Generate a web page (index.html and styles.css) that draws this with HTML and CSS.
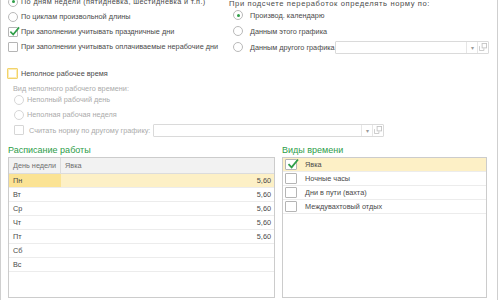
FILE: index.html
```html
<!DOCTYPE html>
<html lang="ru">
<head>
<meta charset="utf-8">
<link rel="stylesheet" href="styles.css">
</head>
<body>
<div class="page">
  <div class="top">
    <div class="col-left">
      <div class="row"><span class="radio on"></span><span class="wide-text">По дням недели (пятидневка, шестидневка и т.п.)</span></div>
      <div class="row"><span class="radio"></span><span>По циклам произвольной длины</span></div>
      <div class="row"><span class="check"><svg class="tick" viewBox="0 0 12 12"><path d="M1.5 6.2 L4.6 9.3 L11 1.5"/></svg></span><span>При заполнении учитывать праздничные дни</span></div>
      <div class="row"><span class="check"></span><span>При заполнении учитывать оплачиваемые нерабочие дни</span></div>
    </div>
    <div class="col-right">
      <div class="label">При подсчете переработок определять норму по:</div>
      <div class="rrow"><span class="radio on"></span><span>Производ. календарю</span></div>
      <div class="rrow"><span class="radio"></span><span>Данным этого графика</span></div>
      <div class="rrow"><span class="radio"></span><span class="rtext">Данным другого графика</span>
        <div class="field wide"><span class="fill"></span><span class="btn drop">▾</span><span class="btn open"><svg viewBox="0 0 9 9"><rect x="3.5" y="0.5" width="5" height="5"/><path d="M0.5 3.5 V8.5 H5.5 V6"/></svg></span></div>
      </div>
    </div>
  </div>

  <div class="part">
    <div class="row main"><span class="check focus"></span><span>Неполное рабочее время</span></div>
    <div class="sub">
      <div class="sublabel">Вид неполного рабочего времени:</div>
      <div class="row dis"><span class="radio"></span><span>Неполный рабочий день</span></div>
      <div class="row dis"><span class="radio"></span><span>Неполная рабочая неделя</span></div>
      <div class="row dis tall"><span class="check"></span><span class="ctext">Считать норму по другому графику:</span>
        <div class="field narrow"><span class="fill"></span><span class="btn drop">▾</span><span class="btn open"><svg viewBox="0 0 9 9"><rect x="3.5" y="0.5" width="5" height="5"/><path d="M0.5 3.5 V8.5 H5.5 V6"/></svg></span></div>
      </div>
    </div>
  </div>

  <div class="bottom">
    <div class="panel schedule">
      <div class="heading">Расписание работы</div>
      <div class="table">
        <div class="thead"><span class="c1">День недели</span><span class="c2">Явка</span></div>
        <div class="tr sel"><span class="c1">Пн</span><span class="c2 num">5,60</span></div>
        <div class="tr"><span class="c1">Вт</span><span class="c2 num">5,60</span></div>
        <div class="tr"><span class="c1">Ср</span><span class="c2 num">5,60</span></div>
        <div class="tr"><span class="c1">Чт</span><span class="c2 num">5,60</span></div>
        <div class="tr"><span class="c1">Пт</span><span class="c2 num">5,60</span></div>
        <div class="tr"><span class="c1">Сб</span><span class="c2 num"></span></div>
        <div class="tr"><span class="c1">Вс</span><span class="c2 num"></span></div>
      </div>
    </div>
    <div class="panel kinds">
      <div class="heading">Виды времени</div>
      <div class="table">
        <div class="kr sel"><span class="kc"><span class="check"><svg class="tick" viewBox="0 0 12 12"><path d="M1.5 6.2 L4.6 9.3 L11 1.5"/></svg></span></span><span class="kt">Явка</span></div>
        <div class="kr"><span class="kc"><span class="check"></span></span><span class="kt">Ночные часы</span></div>
        <div class="kr"><span class="kc"><span class="check"></span></span><span class="kt">Дни в пути (вахта)</span></div>
        <div class="kr"><span class="kc"><span class="check"></span></span><span class="kt">Междувахтовый отдых</span></div>
      </div>
    </div>
  </div>
</div>
</body>
</html>
```
FILE: styles.css
```css
html, body {
  margin: 0;
  padding: 0;
  background: #ffffff;
  overflow: hidden;
}
body {
  font-family: "Liberation Sans", Arial, sans-serif;
  font-size: 7.3px;
  color: #4a4a4a;
}
.page {
  width: 496px;
  height: 300px;
  border-left: 1px solid #cfcfcf;
  border-right: 1px solid #cfcfcf;
  overflow: hidden;
}
.top {
  display: flex;
  margin-top: -6px;
}
.col-left {
  width: 221px;
  padding-left: 7px;
}
.row {
  display: flex;
  align-items: center;
  gap: 3px;
  height: 15px;
  white-space: nowrap;
}
.wide-text {
  letter-spacing: 0.35px;
}
.radio {
  box-sizing: border-box;
  width: 10px;
  height: 10px;
  border: 1px solid #b9b9b9;
  border-radius: 50%;
  background: #fff;
  position: relative;
  flex: none;
}
.radio.on::after {
  content: "";
  position: absolute;
  left: 2.5px;
  top: 2.5px;
  width: 3px;
  height: 3px;
  border-radius: 50%;
  background: #2f9e48;
}
.check {
  box-sizing: border-box;
  width: 10px;
  height: 10px;
  border: 1px solid #b5b5b5;
  border-radius: 1px;
  background: #fff;
  position: relative;
  flex: none;
}
.check.focus {
  width: 11px;
  height: 11px;
  border-color: #f2d36a;
  box-shadow: inset 0 0 0 1px #fbecb8;
}
.tick {
  position: absolute;
  left: 0;
  top: -2px;
  width: 11px;
  height: 11px;
  fill: none;
  stroke: #2f9e48;
  stroke-width: 1.8;
}
.col-right {
  padding-top: 5px;
  flex: 1;
}
.label {
  line-height: 10px;
  margin-bottom: -2px;
  white-space: nowrap;
  font-size: 7.6px;
  letter-spacing: 0.6px;
}
.rrow {
  display: flex;
  align-items: center;
  height: 16px;
  padding-left: 4px;
  gap: 7px;
  white-space: nowrap;
}
.rtext {
  width: 82px;
}
.field {
  display: flex;
  box-sizing: border-box;
  height: 13px;
  border: 1px solid #dadada;
  border-radius: 1px;
  background: #fff;
}
.field.wide {
  width: 154px;
  margin-left: -4px;
}
.field.narrow {
  width: 231px;
}
.ctext {
  width: 121px;
}
.fill {
  flex: 1;
}
.btn {
  width: 10px;
  border-left: 1px solid #e6e6e6;
  display: flex;
  align-items: center;
  justify-content: center;
  color: #9a9a9a;
  font-size: 6px;
}
.btn.open svg {
  width: 8px;
  height: 8px;
  fill: none;
  stroke: #c4c4c4;
  stroke-width: 1;
}
.part {
  margin-top: 11px;
  padding-left: 6px;
}
.row.main {
  gap: 3px;
}
.sub {
  padding-left: 6px;
}
.sublabel {
  line-height: 10px;
  margin-top: 3px;
  color: #ababab;
  margin-bottom: -2px;
}
.row.dis {
  color: #ababab;
  padding-left: 1px;
  gap: 3px;
}
.row.dis .radio, .row.dis .check {
  border-color: #d6d6d6;
}
.row.dis .check {
  margin-right: 2px;
}
.row.tall {
  height: 16px;
}
.bottom {
  display: flex;
  gap: 7px;
  padding-left: 7px;
  margin-top: 5px;
}
.heading {
  color: #2e9d49;
  font-size: 9px;
  line-height: 14px;
  height: 14px;
}
.table {
  box-sizing: border-box;
  height: 141px;
  border: 1px solid #cccccc;
  background: #fff;
}
.schedule {
  width: 267px;
}
.kinds {
  width: 205px;
}
.thead {
  display: flex;
  height: 15px;
  background: #f2f2f2;
  border-bottom: 1px solid #dcdcdc;
  color: #6f6f6f;
  line-height: 15px;
}
.thead .c1 {
  border-right: 1px solid #dcdcdc;
}
.c1 {
  width: 47px;
  padding-left: 4px;
  flex: none;
  white-space: nowrap;
}
.c2 {
  flex: 1;
  padding-left: 4px;
}
.tr {
  display: flex;
  height: 13px;
  line-height: 13px;
  border-bottom: 1px solid #ececec;
  color: #4a4a4a;
}
.tr .c1 {
  width: 48px;
}
.num {
  text-align: right;
  padding-right: 3px;
}
.tr.sel {
  background: #fdf0c6;
}
.tr.sel .c1 {
  background: #fbe394;
}
.kr {
  display: flex;
  align-items: center;
  height: 13px;
  border-bottom: 1px solid #ececec;
}
.kr.sel {
  background: #fdf0c6;
}
.kc {
  width: 17px;
  display: flex;
  align-items: center;
  padding-left: 2px;
}
.kc .check {
  width: 12px;
  height: 11px;
}
.kc .tick {
  left: 1px;
  top: -2px;
  width: 12px;
  height: 12px;
}
.kt {
  padding-left: 3px;
}
```
